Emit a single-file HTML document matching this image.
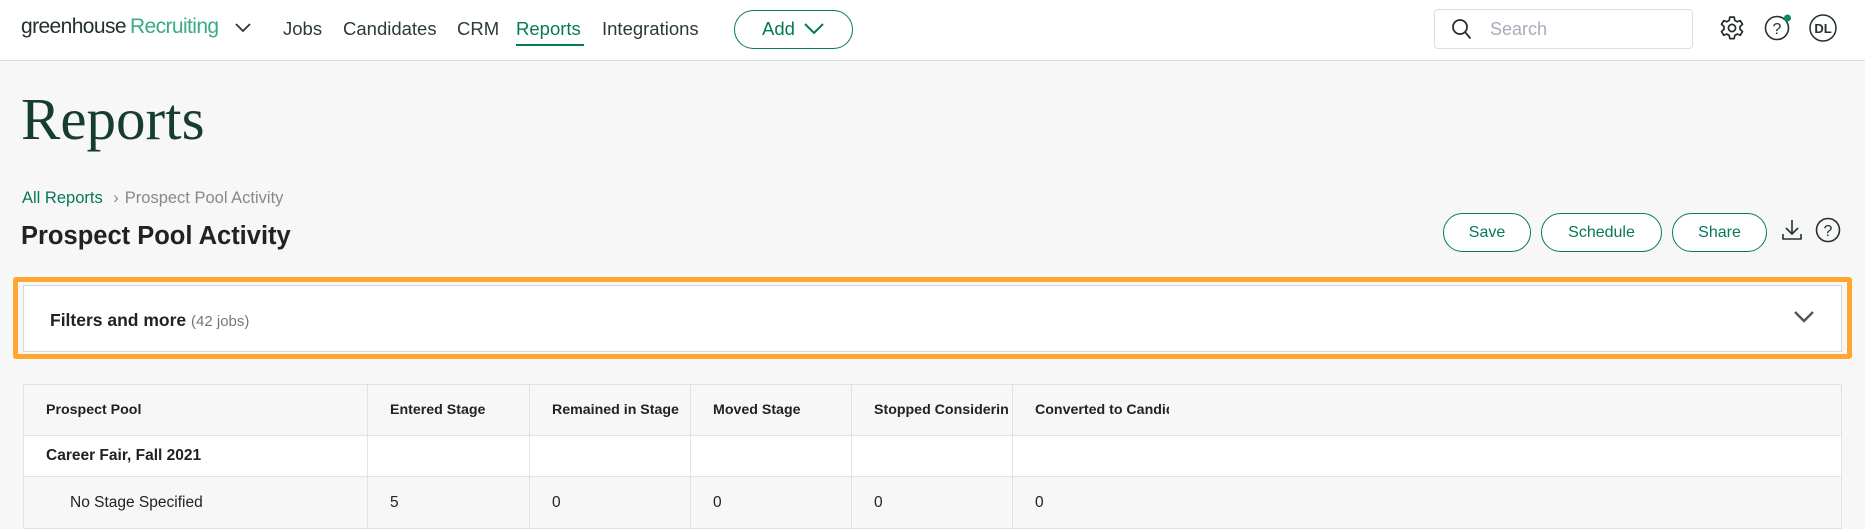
<!DOCTYPE html>
<html><head><meta charset="utf-8"><style>
*{box-sizing:border-box;margin:0;padding:0}
body{width:1865px;height:527px;overflow:hidden;background:#f7f7f7;font-family:"Liberation Sans",sans-serif;color:#222;position:relative}
.a{position:absolute;white-space:nowrap}
.nav{position:absolute;left:0;top:0;width:1865px;height:61px;background:#fff;border-bottom:1px solid #dcdcdc}
.nl{font-size:18.5px;color:#2c3b38;top:18px}
.btn{position:absolute;border:1.5px solid #0a7a58;border-radius:22px;background:#fff;color:#07785a;font-size:16px;text-align:center}
th,td{border-right:1px solid #e2e2e2;border-bottom:1px solid #e2e2e2;text-align:left;overflow:hidden;white-space:nowrap;padding:0}
table{position:absolute;left:23px;top:384px;width:1819px;border-collapse:collapse;border-top:1px solid #e2e2e2;border-left:1px solid #e2e2e2;table-layout:fixed}
th{font-size:14.2px;font-weight:bold;height:51px;background:#f7f7f7;padding-left:22px;color:#222}
th div{overflow:hidden;max-width:134px}
td{font-size:15.5px;padding-left:22px}
</style></head><body>
<div class="nav">
<div class="a" style="left:21px;top:15px;font-size:21px;color:#24302e;letter-spacing:-0.6px">greenhouse<span style="color:#3aab83;margin-left:4px">Recruiting</span></div>
<svg class="a" style="left:234px;top:22px" width="18" height="12"><path d="M2 2l7 7 7-7" fill="none" stroke="#333" stroke-width="1.8"/></svg>
<div class="a nl" style="left:283px">Jobs</div>
<div class="a nl" style="left:343px">Candidates</div>
<div class="a nl" style="left:457px">CRM</div>
<div class="a nl" style="left:516px;color:#07785a">Reports</div>
<div class="a" style="left:516px;top:44px;width:68px;height:2px;background:#07785a"></div>
<div class="a nl" style="left:602px">Integrations</div>
<div class="btn" style="left:734px;top:10px;width:119px;height:39px;font-size:18.5px;line-height:36px;text-align:left;padding-left:27px">Add</div>
<svg class="a" style="left:803px;top:22px" width="22" height="14"><path d="M2 2l9 9 9-9" fill="none" stroke="#07785a" stroke-width="2"/></svg>
<div class="a" style="left:1434px;top:9px;width:259px;height:40px;border:1px solid #ddd;border-radius:4px;background:#fff"></div>
<svg class="a" style="left:1451px;top:18px" width="22" height="24"><circle cx="9" cy="9" r="7" fill="none" stroke="#24302e" stroke-width="1.8"/><path d="M14 14l5.5 6.5" stroke="#24302e" stroke-width="1.8"/></svg>
<div class="a" style="left:1490px;top:19px;font-size:18px;color:#aab">Search</div>
<svg class="a" style="left:1719px;top:15px" width="26" height="26" viewBox="0 0 24 24"><path d="M10 2h4l.6 3 2.2 1.2 2.9-1 2 3.4-2.3 2v2.6l2.3 2-2 3.4-2.9-1-2.2 1.2-.6 3h-4l-.6-3-2.2-1.2-2.900 1-2-3.4 2.3-2v-2.6l-2.3-2 2-3.4 2.9 1L9.4 5z" fill="none" stroke="#24302e" stroke-width="1.6" stroke-linejoin="round"/><circle cx="12" cy="12" r="3.3" fill="none" stroke="#24302e" stroke-width="1.6"/></svg>
<svg class="a" style="left:1764px;top:13px" width="30" height="30"><circle cx="13" cy="15" r="11.5" fill="none" stroke="#24302e" stroke-width="1.6"/><text x="13" y="21" font-size="16" text-anchor="middle" fill="#24302e" font-family="Liberation Sans">?</text><circle cx="23.5" cy="5" r="3.5" fill="#0a8a5e"/></svg>
<svg class="a" style="left:1808px;top:13px" width="30" height="30"><circle cx="15" cy="15" r="13" fill="none" stroke="#24302e" stroke-width="1.5"/><text x="15" y="20" font-size="13" font-weight="bold" text-anchor="middle" fill="#24302e" font-family="Liberation Sans">DL</text></svg>
</div>
<div class="a" style="left:21px;top:85px;font-family:'Liberation Serif',serif;font-size:59px;color:#163d30">Reports</div>
<div class="a" style="left:22px;top:189px;font-size:16.5px;color:#07785a">All Reports <span style="color:#888;margin:0 6px">›</span><span style="color:#888">Prospect Pool Activity</span></div>
<div class="a" style="left:21px;top:222px;font-size:25.5px;font-weight:bold;color:#222">Prospect Pool Activity</div>
<div class="btn" style="left:1443px;top:213px;width:88px;height:39px;line-height:38px">Save</div>
<div class="btn" style="left:1541px;top:213px;width:121px;height:39px;line-height:38px">Schedule</div>
<div class="btn" style="left:1672px;top:213px;width:95px;height:39px;line-height:38px">Share</div>
<svg class="a" style="left:1780px;top:218px" width="24" height="24"><path d="M12 2v14M6 10l6 6 6-6M3 16v5h18v-5" fill="none" stroke="#24302e" stroke-width="1.6"/></svg>
<svg class="a" style="left:1815px;top:217px" width="28" height="28"><circle cx="13" cy="13" r="11.5" fill="none" stroke="#24302e" stroke-width="1.6"/><text x="13" y="19" font-size="16" text-anchor="middle" fill="#24302e" font-family="Liberation Sans">?</text></svg>
<div class="a" style="left:13px;top:277px;width:1839px;height:82px;border:5px solid #ffa630;border-radius:3px;background:#f7f7f7"></div>
<div class="a" style="left:23px;top:285px;width:1819px;height:67px;border:1px solid #d8d8d8;background:#fff"></div>
<div class="a" style="left:50px;top:310px;font-size:17.5px;font-weight:bold;color:#222">Filters and more <span style="font-weight:normal;font-size:15px;color:#777">(42 jobs)</span></div>
<svg class="a" style="left:1793px;top:310px" width="22" height="14"><path d="M2 2l9 9 9-9" fill="none" stroke="#555" stroke-width="2.4"/></svg>
<table>
<colgroup><col style="width:344px"><col style="width:162px"><col style="width:161px"><col style="width:161px"><col style="width:161px"><col></colgroup>
<tr><th>Prospect Pool</th><th><div>Entered Stage</div></th><th><div>Remained in Stage</div></th><th><div>Moved Stage</div></th><th><div>Stopped Considering</div></th><th><div>Converted to Candidate</div></th></tr>
<tr style="background:#fff;height:41px"><td style="font-weight:bold">Career Fair, Fall 2021</td><td></td><td></td><td></td><td></td><td></td></tr>
<tr style="background:#f7f7f7;height:52px"><td style="padding-left:46px">No Stage Specified</td><td>5</td><td>0</td><td>0</td><td>0</td><td>0</td></tr>
</table>
</body></html>
